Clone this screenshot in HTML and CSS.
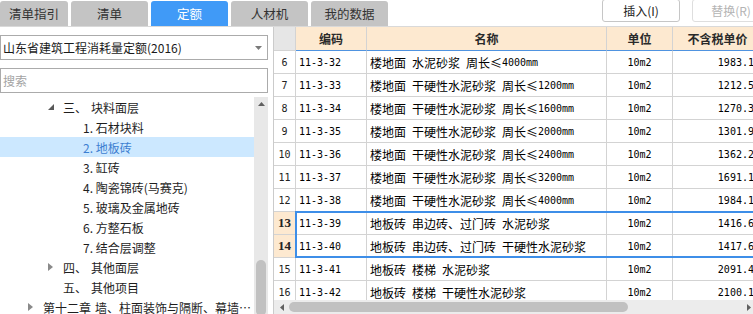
FILE: index.html
```html
<!DOCTYPE html>
<html lang="zh-CN">
<head>
<meta charset="utf-8">
<title>定额</title>
<link rel="stylesheet" href="styles.css">
</head>
<body>
<div class="app">
  <div class="topbar">
    <div class="tabs">
      <div class="tab first">清单指引</div>
      <div class="tab">清单</div>
      <div class="tab active">定额</div>
      <div class="tab">人材机</div>
      <div class="tab">我的数据</div>
    </div>
    <div class="actions">
      <div class="btn">插入(I)</div>
      <div class="btn disabled">替换(R)</div>
    </div>
  </div>
  <div class="main">
    <aside class="left">
      <div class="select">
        <span>山东省建筑工程消耗量定额(2016)</span>
        <svg class="caret" width="7" height="4" viewBox="0 0 7 4"><path d="M0 0h7L3.5 4z" fill="#7a7a7a"/></svg>
      </div>
      <div class="search">搜索</div>
      <div class="tree-wrap">
        <div class="tree">
          <div class="node l2"><span class="tw"><svg width="6" height="6" viewBox="0 0 6 6"><path d="M6 0v6H0z" fill="#595959"/></svg></span><span class="num">三、</span><span>块料面层</span></div>
          <div class="node l3"><span class="tw"></span><span>1. 石材块料</span></div>
          <div class="node l3 sel"><span class="tw"></span><span>2. 地板砖</span></div>
          <div class="node l3"><span class="tw"></span><span>3. 缸砖</span></div>
          <div class="node l3"><span class="tw"></span><span>4. 陶瓷锦砖(马赛克)</span></div>
          <div class="node l3"><span class="tw"></span><span>5. 玻璃及金属地砖</span></div>
          <div class="node l3"><span class="tw"></span><span>6. 方整石板</span></div>
          <div class="node l3"><span class="tw"></span><span>7. 结合层调整</span></div>
          <div class="node l2"><span class="tw"><svg width="5" height="8" viewBox="0 0 5 8"><path d="M0 0l5 4-5 4z" fill="#8a8a8a"/></svg></span><span class="num">四、</span><span>其他面层</span></div>
          <div class="node l2"><span class="tw"></span><span class="num">五、</span><span>其他项目</span></div>
          <div class="node l1"><span class="tw"><svg width="5" height="8" viewBox="0 0 5 8"><path d="M0 0l5 4-5 4z" fill="#8a8a8a"/></svg></span><span class="ell"><span class="num">第十二章</span>墙、柱面装饰与隔断、幕墙工程</span></div>
        </div>
        <div class="vscroll">
          <svg class="up" width="7" height="4" viewBox="0 0 7 4"><path d="M0 4h7L3.5 0z" fill="#606060"/></svg>
          <div class="vthumb"></div>
        </div>
      </div>
    </aside>
    <section class="grid">
      <div class="row hdr">
        <div class="c rn"></div>
        <div class="c">编码</div>
        <div class="c">名称</div>
        <div class="c">单位</div>
        <div class="c">不含税单价</div>
      </div>
      <div class="body">
        <div class="row"><div class="c rn">6</div><div class="c code">11-3-32</div><div class="c name">楼地面&ensp;水泥砂浆&ensp;周长≤<span class="a">4000mm</span></div><div class="c unit">10m2</div><div class="c price">1983.14</div></div>
        <div class="row"><div class="c rn">7</div><div class="c code">11-3-33</div><div class="c name">楼地面&ensp;干硬性水泥砂浆&ensp;周长≤<span class="a">1200mm</span></div><div class="c unit">10m2</div><div class="c price">1212.57</div></div>
        <div class="row"><div class="c rn">8</div><div class="c code">11-3-34</div><div class="c name">楼地面&ensp;干硬性水泥砂浆&ensp;周长≤<span class="a">1600mm</span></div><div class="c unit">10m2</div><div class="c price">1270.35</div></div>
        <div class="row"><div class="c rn">9</div><div class="c code">11-3-35</div><div class="c name">楼地面&ensp;干硬性水泥砂浆&ensp;周长≤<span class="a">2000mm</span></div><div class="c unit">10m2</div><div class="c price">1301.94</div></div>
        <div class="row"><div class="c rn">10</div><div class="c code">11-3-36</div><div class="c name">楼地面&ensp;干硬性水泥砂浆&ensp;周长≤<span class="a">2400mm</span></div><div class="c unit">10m2</div><div class="c price">1362.28</div></div>
        <div class="row"><div class="c rn">11</div><div class="c code">11-3-37</div><div class="c name">楼地面&ensp;干硬性水泥砂浆&ensp;周长≤<span class="a">3200mm</span></div><div class="c unit">10m2</div><div class="c price">1691.14</div></div>
        <div class="row"><div class="c rn">12</div><div class="c code">11-3-38</div><div class="c name">楼地面&ensp;干硬性水泥砂浆&ensp;周长≤<span class="a">4000mm</span></div><div class="c unit">10m2</div><div class="c price">1984.16</div></div>
        <div class="selgroup">
          <div class="row"><div class="c rn on">13</div><div class="c code">11-3-39</div><div class="c name">地板砖&ensp;串边砖、过门砖&ensp;水泥砂浆</div><div class="c unit">10m2</div><div class="c price">1416.61</div></div>
          <div class="row"><div class="c rn on">14</div><div class="c code">11-3-40</div><div class="c name">地板砖&ensp;串边砖、过门砖&ensp;干硬性水泥砂浆</div><div class="c unit">10m2</div><div class="c price">1417.61</div></div>
        </div>
        <div class="row"><div class="c rn">15</div><div class="c code">11-3-41</div><div class="c name">地板砖&ensp;楼梯&ensp;水泥砂浆</div><div class="c unit">10m2</div><div class="c price">2091.42</div></div>
        <div class="row"><div class="c rn">16</div><div class="c code">11-3-42</div><div class="c name">地板砖&ensp;楼梯&ensp;干硬性水泥砂浆</div><div class="c unit">10m2</div><div class="c price">2100.13</div></div>
      </div>
      <div class="hscroll">
        <svg width="4" height="7" viewBox="0 0 4 7"><path d="M4 0v7L0 3.5z" fill="#606060"/></svg>
        <div class="hthumb"></div>
        <svg class="right" width="4" height="7" viewBox="0 0 4 7"><path d="M0 0v7l4-3.5z" fill="#606060"/></svg>
      </div>
    </section>
  </div>
</div>
</body>
</html>
```
FILE: styles.css
```css
* { box-sizing: border-box; }
body {
  margin: 0;
  font-family: "Noto Sans CJK SC", "Noto Sans", sans-serif;
  font-size: 12px;
  color: #1e1e1e;
  background: #fff;
}
.app {
  width: 753px;
  height: 314px;
  overflow: hidden;
  display: flex;
  flex-direction: column;
}
.topbar {
  height: 27px;
  flex: none;
  display: flex;
  border-bottom: 1px solid #d9d9d9;
}
.tabs {
  display: flex;
  gap: 3px;
  padding-top: 1px;
  flex: none;
}
.tab {
  width: 77px;
  height: 25px;
  background: #c4c4c4;
  border-radius: 3px 3px 0 0;
  display: flex;
  align-items: center;
  justify-content: center;
  font-size: 12.5px;
  color: #333;
}
.tab.first { width: 68px; }
.tab.active { background: #409af7; color: #fff; }
.actions {
  margin-left: auto;
  margin-right: -17px;
  display: flex;
  gap: 12px;
  align-items: flex-start;
  flex: none;
}
.btn {
  width: 78px;
  height: 23px;
  margin-top: -1px;
  border: 1px solid #c6c6c6;
  border-radius: 3px;
  background: #fff;
  display: flex;
  align-items: center;
  justify-content: center;
  font-size: 12px;
  color: #222;
}
.btn.disabled { color: #b4b4b4; border-color: #dedede; }
.main {
  flex: 1;
  display: flex;
  min-height: 0;
}
.left {
  width: 268px;
  flex: none;
  display: flex;
  flex-direction: column;
  padding-top: 8px;
}
.select {
  height: 25px;
  border: 1px solid #ababab;
  display: flex;
  align-items: center;
  justify-content: space-between;
  padding: 0 5px 0 2px;
  color: #1a1a1a;
}
.search {
  height: 25px;
  margin-top: 8px;
  border: 1px solid #ababab;
  display: flex;
  align-items: center;
  padding-left: 2px;
  color: #a3a3a3;
}
.tree-wrap {
  flex: 1;
  margin-top: 4px;
  display: flex;
  min-height: 0;
  overflow: hidden;
}
.tree { flex: 1; min-width: 0; }
.node {
  height: 20px;
  display: flex;
  align-items: center;
  white-space: nowrap;
  color: #1e1e1e;
}
.node.l1 { padding-left: 28px; }
.node.l2 { padding-left: 48px; }
.node.l3 { padding-left: 68px; }
.node.sel { background: #cce8ff; color: #3d7fd1; }
.tw {
  width: 15px;
  flex: none;
  display: flex;
  align-items: center;
}
.num { margin-right: 4px; }
.ell {
  width: 209px;
  overflow: hidden;
  text-overflow: ellipsis;
  white-space: nowrap;
}
.vscroll {
  width: 14px;
  flex: none;
  background: #e8e8e8;
  display: flex;
  flex-direction: column;
  align-items: center;
}
.up { margin-top: 5px; }
.vthumb {
  margin-top: auto;
  width: 10px;
  height: 56px;
  margin-bottom: -2px;
  background: #c1c1c1;
  border-radius: 5px;
}
.grid {
  flex: 1;
  min-width: 0;
  margin-left: 5px;
  border-left: 1px solid #cbcbcb;
  display: flex;
  flex-direction: column;
  overflow: hidden;
}
.row {
  display: grid;
  grid-template-columns: 22px 71px 240px 66px 90px;
  height: 23px;
  width: 489px;
  font-family: "DejaVu Sans Mono", "Noto Sans CJK SC", monospace;
  font-size: 10px;
  color: #000;
}
.c {
  border-right: 1px solid #d3d3d3;
  border-bottom: 1px solid #d3d3d3;
  display: flex;
  align-items: center;
  white-space: nowrap;
  overflow: hidden;
}
.hdr { height: 24px; flex: none; }
.hdr .c {
  background: #fde9d0;
  border-bottom-color: #4f93e0;
  justify-content: center;
  font-family: "Noto Sans CJK SC", sans-serif;
  font-weight: bold;
  font-size: 12px;
  color: #2a2a2a;
}
.hdr .c.rn { background: #e6e6e6; border-bottom-color: #d3d3d3; }
.body {
  flex: 1;
  min-height: 0;
  overflow: hidden;
}
.rn {
  justify-content: center;
  font-family: "DejaVu Sans Mono", monospace;
  font-size: 10px;
  color: #222;
}
.rn.on {
  background: #fde9d0;
  font-family: "Liberation Serif", serif;
  font-weight: bold;
  font-size: 13px;
}
.code { padding-left: 3px; }
.name {
  padding-left: 3px;
  font-family: "Noto Sans CJK SC", sans-serif;
  font-size: 12px;
}
.a {
  font-family: "DejaVu Sans Mono", monospace;
  font-size: 10px;
}
.unit { justify-content: center; }
.price { justify-content: flex-end; padding-right: 2px; }
.selgroup { position: relative; }
.selgroup::after {
  content: "";
  position: absolute;
  left: 21px;
  right: -4px;
  top: -1px;
  bottom: 0;
  border: 2px solid #3d8ee8;
  pointer-events: none;
}
.hscroll {
  height: 14px;
  flex: none;
  background: #ececec;
  display: flex;
  align-items: center;
  padding: 0 2px 0 6px;
}
.hthumb {
  margin-left: 5px;
  width: 339px;
  height: 10px;
  background: #c1c1c1;
  border-radius: 5px;
}
.right { margin-left: auto; }
```
